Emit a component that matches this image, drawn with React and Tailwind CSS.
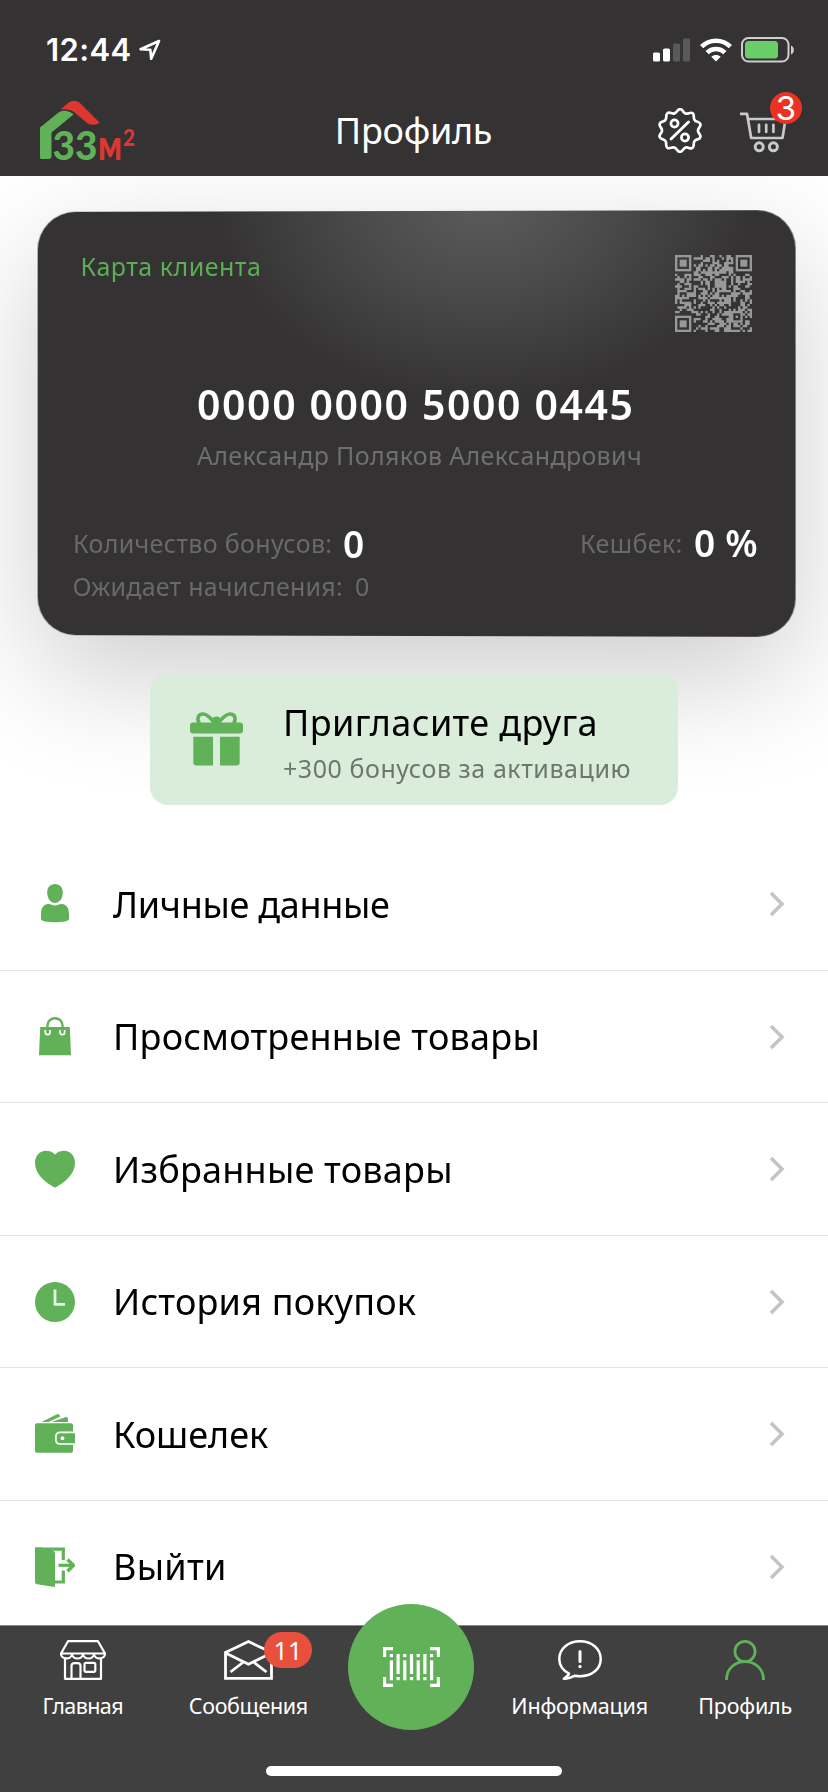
import { Fragment } from 'react';
import clsx from 'clsx';

const GREEN = '#60b158';

/* ---------- Status bar ---------- */

function StatusBar() {
  return (
    <div className="flex h-10 items-center justify-between pl-[46px] pr-[33px]">
      <div className="flex items-center">
        <span className="w-[93px] font-[Inter] text-[31px] leading-10 font-semibold tracking-[0.4px]">12:44</span>
        <svg width="22" height="22" viewBox="0 0 22 22" fill="none" stroke="#fff" strokeWidth="2.6" strokeLinejoin="round">
          <path d="M20 2 L1.6 10.2 L11.3 10.7 L12.2 19.8 Z" />
        </svg>
      </div>
      <div className="flex items-center">
        <svg width="38" height="24" viewBox="0 0 38 24" fill="#fff">
          <rect x="0" y="14.5" width="7" height="9" rx="1.6" />
          <rect x="10" y="10.5" width="7" height="13" rx="1.6" />
          <rect x="20" y="5.5" width="7" height="18" rx="1.6" fill="#5b5a5b" />
          <rect x="30" y="0.5" width="7" height="23" rx="1.6" fill="#5b5a5b" />
        </svg>
        <svg className="ml-[9px]" width="32" height="24" viewBox="0 0 32 24" fill="none" stroke="#fff" strokeWidth="4.6">
          <path d="M1.6 8.6 C9.5 0.7 22.5 0.7 30.4 8.6" />
          <path d="M7.1 14.6 C12 9.8 20 9.8 24.9 14.6" />
          <path d="M16 23.5 L11.3 18.8 C13.9 16.4 18.1 16.4 20.7 18.8 Z" fill="#fff" stroke="none" />
        </svg>
        <svg className="ml-[9px]" width="54" height="26" viewBox="0 0 54 26">
          <rect x="1" y="1" width="46.5" height="23.5" rx="6.5" fill="none" stroke="#cfcecf" strokeWidth="2" />
          <rect x="4" y="4" width="33" height="17.5" rx="3.5" fill="#69ce67" />
          <path d="M50 8.5 C53.8 10 53.8 16 50 17.5 Z" fill="#cfcecf" />
        </svg>
      </div>
    </div>
  );
}

/* ---------- Header ---------- */

function Logo() {
  return (
    <svg width="96" height="60" viewBox="0 0 96 60" className="overflow-visible">
      <path d="M0 27.5 L18.5 12.5 C23 9.7 29 10.6 33.5 14.5 L11.5 32.5 V56 Q11.5 59 8.5 59 H1.5 Q0 59 0 57.5 Z" fill={GREEN} />
      <path d="M20.5 9.6 L27.5 3.6 C31.5 -0.2 37 0.2 40.5 3.4 L59.5 22.4 C56 25.4 50 25.8 46.5 22.6 L34.5 12.4 C30 9.2 25 9 20.5 9.6 Z" fill="#dc3831" />
      <text x="12.5" y="59.5" fontFamily="Lato, sans-serif" fontWeight="900" fontSize="40" fill={GREEN}>
        <tspan textLength="45" lengthAdjust="spacingAndGlyphs">33</tspan>
        <tspan x="58" fontSize="42" fill="#dc3831" textLength="24" lengthAdjust="spacingAndGlyphs">м</tspan>
        <tspan x="83" dy="-13.5" fontSize="23" fill="#dc3831" textLength="12" lengthAdjust="spacingAndGlyphs">2</tspan>
      </text>
    </svg>
  );
}

// Scalloped outline, 10 petals around the centre
const scallop = Array.from({ length: 10 }, (_, i) => {
  const pt = (deg, r) => {
    const a = ((deg - 90) * Math.PI) / 180;
    return `${(22 + r * Math.cos(a)).toFixed(2)} ${(22.5 + r * Math.sin(a)).toFixed(2)}`;
  };
  const d = i * 36;
  return `${i === 0 ? `M${pt(-18, 18)}` : ''} C${pt(d - 9, 18)} ${pt(d - 8, 21.4)} ${pt(d, 21.4)} S${pt(d + 9, 18)} ${pt(d + 18, 18)}`;
}).join(' ');

function DiscountIcon() {
  return (
    <svg width="44" height="45" viewBox="0 0 44 45" fill="none" stroke="#fff" strokeWidth="2.7" strokeLinejoin="round">
      <path d={`${scallop} Z`} />
      <circle cx="16.5" cy="15.5" r="3.6" />
      <circle cx="27" cy="29.5" r="3.6" />
      <path d="M30.5 14 L13 31" strokeLinecap="round" strokeWidth="2.9" />
    </svg>
  );
}

function CartIcon() {
  return (
    <svg width="47" height="41" viewBox="0 0 47 41" fill="none" stroke="#c9c8cd" strokeWidth="2.7">
      <path d="M0 1.8 H7 L11.2 26 H42.5 L45.5 7 H8.2" strokeLinejoin="round" />
      <path d="M19 12.8 V20 M26.2 12.8 V20 M33.4 12.8 V20" strokeLinecap="round" />
      <circle cx="19.2" cy="34.8" r="4" strokeWidth="3" />
      <circle cx="33.4" cy="34.8" r="4" strokeWidth="3" />
    </svg>
  );
}

function Header() {
  return (
    <header className="relative z-10 h-[176px] bg-[#343233] pt-[30px] text-white">
      <StatusBar />
      <div className="mt-5 grid h-20 grid-cols-3 items-center pl-10 pr-[41px]">
        <Logo />
        <h1 className="mt-px text-center text-[36px] leading-[48px] tracking-[-0.28px]">Профиль</h1>
        <div className="flex items-center justify-end gap-[38px]">
          <DiscountIcon />
          <div className="relative mt-1">
            <CartIcon />
            <span className="absolute -top-5 -right-[15px] flex size-8 items-center justify-center rounded-full bg-[#eb3323] font-[Inter] text-[33px] leading-8">
              3
            </span>
          </div>
        </div>
      </div>
    </header>
  );
}

/* ---------- Client card ---------- */

const QR_SIZE = 33;

function inFinder(x, y) {
  return (x < 8 && y < 8) || (x > 24 && y < 8) || (x < 8 && y > 24);
}

function buildQr() {
  let seed = 50000445;
  const cells = [];
  for (let y = 0; y < QR_SIZE; y++) {
    for (let x = 0; x < QR_SIZE; x++) {
      seed = (seed * 1103515245 + 12345) % 2147483648;
      const inAlign = x > 23 && x < 29 && y > 23 && y < 29;
      if (!inFinder(x, y) && !inAlign && (seed >> 12) % 100 < 54) cells.push(`M${x} ${y}h1v1h-1z`);
    }
  }
  return cells.join('');
}

const qrPath = buildQr();

function QrCode() {
  return (
    <svg width="77" height="77" viewBox="0 0 33 33" fill="#999899">
      <path d={qrPath} />
      {[[0, 0], [26, 0], [0, 26]].map(([x, y]) => (
        <Fragment key={`${x}-${y}`}>
          <rect x={x + 0.5} y={y + 0.5} width="6" height="6" fill="none" stroke="#999899" />
          <rect x={x + 2} y={y + 2} width="3" height="3" />
        </Fragment>
      ))}
      <rect x="24.5" y="24.5" width="4" height="4" fill="none" stroke="#999899" />
      <rect x="26" y="26" width="1" height="1" />
    </svg>
  );
}

function ClientCard() {
  return (
    <section className="relative mt-[34.5px] ml-[37px] h-[425px] w-[758px]">
      {/* Slightly turned plate behind the text */}
      <div className="absolute inset-y-0 right-[1.5px] -left-[1.5px] rounded-[38px] bg-[#343233] bg-[radial-gradient(ellipse_270px_205px_at_447px_-15px,#5d5c5d_0%,#4c4b4c_45%,#343233_100%)] shadow-[0_40px_120px_rgba(0,0,0,0.2)] [transform:perspective(1400px)_rotateY(-0.9deg)]" />
      <div className="relative flex h-full flex-col pt-[40px]">
        <div className="flex h-[30px] items-start justify-between pr-[43.5px] pl-[43.5px]">
          <span className="text-[25px] leading-[30px] tracking-[0.5px] text-[#5cae55]">Карта клиента</span>
          <div className="mt-[4px]">
            <QrCode />
          </div>
        </div>
        <div className="mt-[99px] ml-[160px] whitespace-nowrap">
          <p className="text-[41px] leading-[48px] font-semibold tracking-[1.6px] text-white">0000 0000 5000 0445</p>
          <p className="mt-[12.5px] text-[25px] leading-[30px] tracking-[0.34px] text-[#6f6e70]">
            Александр Поляков Александрович
          </p>
        </div>
        <div className="mt-[58px] flex justify-between pr-[37px] pl-[36px] text-[25px] leading-[30px] whitespace-nowrap text-[#69686a]">
          <p className="flex">
            <span className="w-[270px] tracking-[0.34px]">Количество бонусов:</span>
            <span className="mt-px text-[37px] font-semibold text-white">0</span>
          </p>
          <p className="flex">
            <span className="w-[114px] tracking-[0.4px]">Кешбек:</span>
            <span className="text-[37px] font-semibold tracking-[0.3px] text-white">0 %</span>
          </p>
        </div>
        <p className="mt-[12px] flex pl-[35.5px] text-[25px] leading-[30px] text-[#69686a]">
          <span className="w-[282.5px] tracking-[0.22px]">Ожидает начисления:</span>
          <span>0</span>
        </p>
      </div>
    </section>
  );
}

/* ---------- Invite banner ---------- */

function GiftIcon() {
  return (
    <svg width="53" height="54" viewBox="0 0 53 54" fill={GREEN}>
      <rect x="0" y="10.5" width="53" height="11" rx="3" />
      <path d="M3.3 24.7 H23 V53.5 H6.5 Q3.3 53.5 3.3 50.3 Z" />
      <path d="M30 24.7 H49.7 V50.3 Q49.7 53.5 46.5 53.5 H30 Z" />
      <ellipse cx="26.5" cy="9" rx="5" ry="4.5" />
      <path
        d="M25 11 C21 7 18 2 13 2 C7 2 7 8.5 9.5 11.5 M28 11 C32 7 35 2 40 2 C46 2 46 8.5 43.5 11.5"
        fill="none"
        stroke={GREEN}
        strokeWidth="3.6"
      />
    </svg>
  );
}

function InviteBanner() {
  return (
    <section className="relative mt-[37px] ml-[150px] flex h-[132px] w-[528px] rounded-[18px] bg-[#daeddb] pt-[30px] pl-10">
      <div className="mt-[9.5px]">
        <GiftIcon />
      </div>
      <div className="ml-[40px] whitespace-nowrap">
        <p className="text-[36px] leading-10 tracking-[0.38px] text-black">Пригласите друга</p>
        <p className="mt-[10px] text-[25px] leading-[30px] tracking-[0.56px] text-[#6d776e]">+300 бонусов за активацию</p>
      </div>
    </section>
  );
}

/* ---------- Menu ---------- */

const PersonIcon = () => (
  <>
    <path d="M20 0 C25 0 28 3.6 27.8 9 C27.6 14.8 24.2 19 20 19 C15.8 19 12.4 14.8 12.2 9 C12 3.6 15 0 20 0 Z" />
    <path d="M13 20 C15.5 19.6 17 21.5 20 21.5 C23 21.5 24.5 19.6 27 20 C31.5 20.6 34 24 34 30 V35 C34 37 28 38.3 20 38.3 C12 38.3 6 37 6 35 V30 C6 24 8.5 20.6 13 20 Z" />
  </>
);

const BagIcon = () => (
  <>
    <path d="M5.2 10 H34.8 L36 38.3 H4 Z" />
    <path d="M12.4 11 V9 C12.4 -1.3 27.6 -1.3 27.6 9 V11" fill="none" stroke={GREEN} strokeWidth="2.4" />
    <path d="M10.3 13 V15 C10.3 18.6 15 18.6 15 15 V13 M25 13 V15 C25 18.6 29.7 18.6 29.7 15 V13" fill="none" stroke="#fff" strokeWidth="1.7" />
  </>
);

const HeartIcon = () => (
  <path d="M20 5.6 C22.5 2.6 26 1.7 29 1.7 C35.5 1.7 40 7 40 14 C40 25 30 33.5 20 38.7 C10 33.5 0 25 0 14 C0 7 4.5 1.7 11 1.7 C14 1.7 17.5 2.6 20 5.6 Z" />
);

const ClockIcon = () => (
  <>
    <circle cx="20" cy="20" r="20" />
    <path d="M20 7.5 V22.3 H30" fill="none" stroke="#e6f4e5" strokeWidth="2.8" />
  </>
);

const WalletIcon = () => (
  <>
    <path d="M2 9.2 H36 Q38 9.2 38 11.2 V36.7 Q38 38.7 36 38.7 H2 Q0 38.7 0 36.7 V11.2 Q0 9.2 2 9.2 Z" />
    <path d="M6.5 8 L21.5 0.4 Q23.5 -0.6 24.5 1 L25.2 2.6 L13.5 8 Z" />
    <path d="M16.5 8 L30.5 3.2 Q32.5 2.8 32.8 4.4 L33.2 8 Z" />
    <path d="M41 18.4 H25.5 Q20.9 18.4 20.9 22.5 V26 Q20.9 30 25.5 30 H41" fill={GREEN} stroke="#fff" strokeWidth="1.7" />
    <circle cx="27.5" cy="24.2" r="1.9" fill="#fff" />
  </>
);

const ExitIcon = () => (
  <>
    <path d="M0 0.5 H6 L17 3 Q20 4 20 7 V40 L2 37.2 Q0 36.8 0 35 Z" />
    <path d="M0 2.1 H28.3 V13 M28.3 23.5 V35 H19" fill="none" stroke={GREEN} strokeWidth="3.2" />
    <path d="M23.5 18.3 H36" fill="none" stroke={GREEN} strokeWidth="3.2" />
    <path d="M32.5 12.5 L38.5 18.3 L32.5 24.2" fill="none" stroke={GREEN} strokeWidth="3.4" />
  </>
);

const menuItems = [
  { label: 'Личные данные', Icon: PersonIcon, className: 'tracking-[-0.31px]' },
  { label: 'Просмотренные товары', Icon: BagIcon, className: 'tracking-[0.22px]' },
  { label: 'Избранные товары', Icon: HeartIcon, className: 'tracking-[0.22px]' },
  { label: 'История покупок', Icon: ClockIcon, className: 'tracking-[0.2px]' },
  { label: 'Кошелек', Icon: WalletIcon, className: 'tracking-[-0.03px]' },
  { label: 'Выйти', Icon: ExitIcon, className: 'tracking-[0.29px]' },
];

function MenuItem({ label, Icon, className }) {
  return (
    <li className="flex h-[132.5px] shrink-0 items-center border-b border-[#e4e4e4] pt-px pr-[43px] pl-[35px]">
      <svg width="40" height="40" viewBox="0 0 40 40" fill={GREEN}>
        <Icon />
      </svg>
      <span className={clsx('mt-px ml-[38px] flex-1 text-[36px] leading-[48px] text-black', className)}>{label}</span>
      <svg width="16" height="26" viewBox="0 0 16 26" fill="none" stroke="#c4c4c6" strokeWidth="3.6">
        <path d="M2 2 L13 13 L2 24" />
      </svg>
    </li>
  );
}

/* ---------- Tab bar ---------- */

const StoreIcon = () => (
  <svg width="46" height="40" viewBox="0 0 46 40" fill="none" stroke="#fff" strokeWidth="2.2" strokeLinejoin="round">
    <path d="M8 1.2 H38 L45 13.5 H1 Z" />
    <path d="M1 13.5 C1 20 11.5 20 12 14 C12.5 20 22.5 20 23 14 C23.5 20 33.5 20 34 14 C34.5 20 45 20 45 13.5" />
    <path d="M5 18 V38.8 H41 V18" />
    <path d="M11.5 38.8 V26 Q11.5 23.2 14.5 23.2 H17.5 Q20.5 23.2 20.5 26 V38.8" />
    <rect x="24.5" y="22.8" width="10.8" height="9" rx="1.5" />
  </svg>
);

const MailIcon = () => (
  <svg width="49" height="40" viewBox="0 0 49 40" fill="none" stroke="#fff" strokeWidth="2.8">
    <path d="M1.5 12.5 L24.5 1.6 L47.5 12.5 V38.4 H1.5 Z" />
    <path d="M1.5 13 L24.5 24.2 L47.5 13 M19.5 22 L6.5 32 M29.5 22 L42.5 32" />
  </svg>
);

const InfoIcon = () => (
  <svg width="44" height="40" viewBox="0 0 44 40" fill="none" stroke="#fff" strokeWidth="2.5" strokeLinejoin="round">
    <path d="M11 33.5 C5 30.5 1.3 25.5 1.3 19 C1.3 8.5 10.5 1.3 22 1.3 S42.7 8.5 42.7 19 S33.5 36.2 22 36.2 C20 36.2 18.5 36 17 35.7 C13 37.8 9.5 38.9 5.8 38.8 C8.5 37 10.3 35.5 11 33.5 Z" />
    <path d="M22 11.5 V21.5" strokeWidth="3" strokeLinecap="round" />
    <circle cx="22" cy="26.6" r="1.1" fill="#fff" strokeWidth="1.2" />
  </svg>
);

const UserIcon = () => (
  <svg width="40" height="40" viewBox="0 0 40 40" fill="none" stroke={GREEN} strokeWidth="2.8">
    <circle cx="20" cy="11.5" r="10.1" />
    <path d="M1.5 40 C1.5 15.5 38.5 15.5 38.5 40" />
  </svg>
);

// Even bars stand below a dot, odd ones hang over a dot
const BarcodeIcon = () => (
  <svg width="57" height="40" viewBox="0 0 57 40" fill="#fff">
    <path d="M0 0 H10 V3.2 H3.2 V10 H0 Z M57 0 V10 H53.8 V3.2 H47 V0 Z M0 40 V30 H3.2 V36.8 H10 V40 Z M57 40 H47 V36.8 H53.8 V30 H57 Z" />
    {[0, 1, 2, 3, 4, 5, 6].map((i) => {
      const x = 6.8 + i * 6.7;
      return i % 2 === 0 ? (
        <Fragment key={i}>
          <rect x={x} y="7" width="3.2" height="3.2" />
          <rect x={x} y="13.3" width="3.2" height="20" />
        </Fragment>
      ) : (
        <Fragment key={i}>
          <rect x={x} y="7" width="3.2" height="20" />
          <rect x={x} y="30" width="3.2" height="3.2" />
        </Fragment>
      );
    })}
  </svg>
);

function Tab({ label, icon, badge, className }) {
  return (
    <div className="flex flex-col items-center pt-[14px]">
      <div className="relative">
        {icon}
        {badge && (
          <span className="absolute -top-2 left-10 flex h-9 w-12 items-center justify-center rounded-full bg-[#e94f3d] text-[25px] leading-9">
            {badge}
          </span>
        )}
      </div>
      <span className={clsx('mt-3 text-[21.5px] leading-7', className)}>{label}</span>
    </div>
  );
}

function TabBar() {
  return (
    <nav className="relative z-10 h-[167px] shrink-0 border-t border-[#8a8a8a] bg-[#404040] text-white">
      <div className="grid grid-cols-5">
        <Tab label="Главная" icon={<StoreIcon />} className="tracking-[-0.6px]" />
        <Tab label="Сообщения" icon={<MailIcon />} badge="11" className="tracking-[-0.35px]" />
        <div />
        <Tab label="Информация" icon={<InfoIcon />} className="tracking-[-0.2px]" />
        <Tab label="Профиль" icon={<UserIcon />} className="tracking-[-0.2px]" />
      </div>
      <button className="absolute -top-[22px] left-[348px] flex size-[126px] items-center justify-center rounded-full bg-[#60b158]">
        <BarcodeIcon />
      </button>
      <div className="absolute bottom-4 left-1/2 h-[10px] w-[296px] -translate-x-1/2 rounded-full bg-white" />
    </nav>
  );
}

export default function App() {
  return (
    <div className="flex h-[1792px] w-[828px] flex-col overflow-hidden bg-white font-['Noto_Sans',sans-serif]">
      <Header />
      <main className="min-h-0 flex-1 overflow-hidden">
        <ClientCard />
        <InviteBanner />
        <ul className="relative mt-[33.5px]">
          {menuItems.map((item) => (
            <MenuItem key={item.label} {...item} />
          ))}
        </ul>
      </main>
      <TabBar />
    </div>
  );
}
